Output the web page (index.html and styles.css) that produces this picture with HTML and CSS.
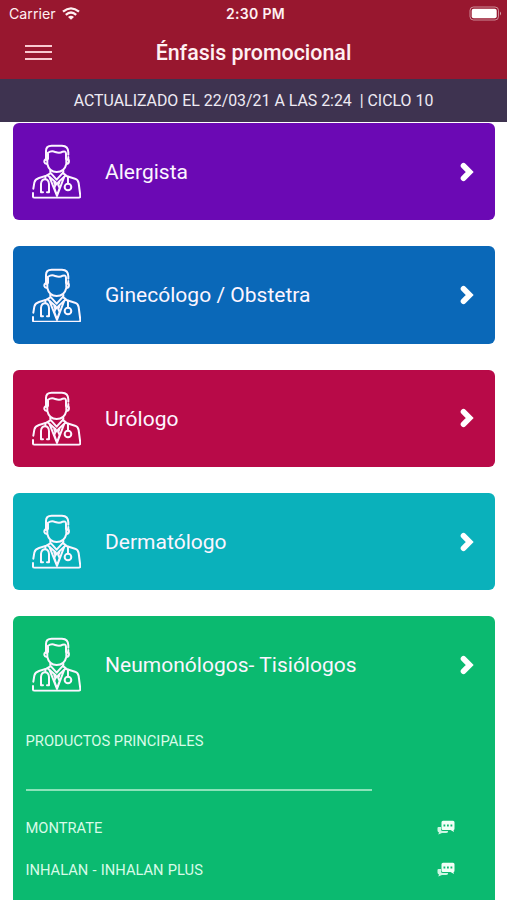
FILE: index.html
```html
<!DOCTYPE html>
<html lang="es">
<head>
<meta charset="utf-8">
<title>Énfasis promocional</title>
<link rel="stylesheet" href="styles.css">
</head>
<body>
<svg class="defs" width="0" height="0">
  <symbol id="doctor" viewBox="36 28 148 164">
    <g fill="none" stroke="currentColor" stroke-width="6" stroke-linecap="round" stroke-linejoin="round">
      <path d="M78 76V49Q78 33 95 33H126Q145 34 145 53V60M145 67V76"/>
      <path d="M84 73V54Q95 46 106 52Q119 57 128 51Q137 48 138 56V73"/>
      <path d="M79 74Q72 74 73 82Q75 89 82 88C85 101 94 112 110 112C126 112 136 101 139 88Q147 88 147 80Q147 74 140 74M82 88V76M139 88V76"/>
      <path d="M91 108V116L82 121L107 143L110 149L115 143L138 122L130 116V108M93 116L110 135L127 116"/>
      <path d="M39 175V186Q39 189 44 189H176Q182 189 181 183L176 145Q174 135 165 132L139 124M82 122L57 130Q45 134 43 144L40 162"/>
      <path d="M89 128L111 184L132 128M103 143L106 151L103 160L111 183L119 160L115 151L118 143"/>
      <path d="M76 125V133M69 173H63V148Q64 134 75 134Q86 134 87 148V173H81"/>
      <path d="M144 126V146"/><circle cx="144" cy="157" r="10"/>
    </g>
  </symbol>
  <symbol id="chevron" viewBox="0 0 14 20">
    <path d="M3.500 3.800L9.700 10L3.500 16.200" fill="none" stroke="currentColor" stroke-width="5.600" stroke-linejoin="miter" stroke-linecap="round"/>
  </symbol>
  <symbol id="chat" viewBox="0 0 18 15">
    <path d="M1.500 7H4V9.500Q4 11 6 11H11V11.500Q11 13 9 13H5L1.300 14.500L2 12.600Q.5 12 .5 10.500V8Q.5 7 1.500 7Z" fill="currentColor" opacity=".85"/>
    <path fill-rule="evenodd" d="M6 .8H16Q17.500.8 17.500 2.300V8.500Q17.500 10 16.500 10L17 12L13.500 10H6Q4.500 10 4.500 8.500V2.300Q4.500.8 6 .8ZM6.500 4.600V6.400H8.300V4.600ZM10 4.600V6.400H11.800V4.600ZM13.500 4.600V6.400H15.300V4.600Z" fill="currentColor"/>
  </symbol>
</svg>
<header class="header">
  <div class="status">
    <div class="carrier"><span>Carrier</span>
      <svg class="wifi" viewBox="0 0 18 13"><g fill="none" stroke="currentColor" stroke-width="2.300"><path d="M1 4.700Q9-2 17 4.700"/><path d="M3.800 7.800Q9 3.300 14.200 7.800"/></g><path d="M6 9.900Q9 7.500 12 9.900L9 12.800Z" fill="currentColor"/></svg>
    </div>
    <time class="clock">2:30 PM</time>
    <svg class="battery" viewBox="0 0 33 15"><rect x="1" y="1" width="28.500" height="13" rx="3.500" fill="none" stroke="currentColor" opacity=".5"/><rect x="2.700" y="2.700" width="25" height="9.600" rx="2" fill="currentColor"/><path d="M31 5.500Q33 7.500 31 9.500Z" fill="currentColor" opacity=".6"/></svg>
  </div>
  <div class="nav">
    <div class="menu"><i></i><i></i><i></i></div>
    <h1 class="title">Énfasis promocional</h1>
  </div>
</header>
<div class="updated">ACTUALIZADO EL 22/03/21 A LAS 2:24 &nbsp;| CICLO 10</div>
<main class="list">
  <section class="card purple"><div class="row"><svg class="doctor"><use href="#doctor"/></svg><h2 class="name">Alergista</h2><svg class="chevron"><use href="#chevron"/></svg></div></section>
  <section class="card blue"><div class="row"><svg class="doctor"><use href="#doctor"/></svg><h2 class="name">Ginecólogo / Obstetra</h2><svg class="chevron"><use href="#chevron"/></svg></div></section>
  <section class="card red"><div class="row"><svg class="doctor"><use href="#doctor"/></svg><h2 class="name">Urólogo</h2><svg class="chevron"><use href="#chevron"/></svg></div></section>
  <section class="card teal"><div class="row"><svg class="doctor"><use href="#doctor"/></svg><h2 class="name">Dermatólogo</h2><svg class="chevron"><use href="#chevron"/></svg></div></section>
  <section class="card green">
    <div class="row"><svg class="doctor"><use href="#doctor"/></svg><h2 class="name">Neumonólogos- Tisiólogos</h2><svg class="chevron"><use href="#chevron"/></svg></div>
    <div class="products">
      <h3 class="heading">PRODUCTOS PRINCIPALES</h3>
      <div class="rule"></div>
      <div class="product"><span>MONTRATE</span><svg class="chat"><use href="#chat"/></svg></div>
      <div class="product"><span>INHALAN - INHALAN PLUS</span><svg class="chat"><use href="#chat"/></svg></div>
    </div>
  </section>
</main>
</body>
</html>
```
FILE: styles.css
```css
* { box-sizing: border-box; }
body { margin: 0; height: 900px; overflow: hidden; background: #fff; color: #fff; font-family: Roboto, "Liberation Sans", sans-serif; }
h1, h2, h3 { margin: 0; font-weight: 400; }
svg { display: block; flex: none; }
.defs { position: absolute; }
.header { height: 79px; background: #98172f; color: #fff0f2; }
.status { height: 27px; display: grid; grid-template-columns: 1fr auto 1fr; align-items: center; padding: 0 5px 0 9px; font-family: Inter, sans-serif; font-size: 14px; }
.carrier { display: flex; align-items: center; gap: 6px; font-size: 14.200px; }
.wifi { width: 18px; height: 13px; }
.clock { font-weight: 600; letter-spacing: .3px; }
.battery { width: 33px; height: 15px; justify-self: end; color: #fff; }
.nav { height: 52px; display: grid; grid-template-columns: 1fr auto 1fr; align-items: center; padding: 0 25px; }
.menu { width: 27px; display: grid; gap: 4.500px; margin-bottom: 2px; }
.menu i { height: 2px; background: #f9c9d0; }
.title { font-size: 21.400px; font-weight: 500; line-height: 51px; margin-bottom: 1px; }
.updated { height: 43px; line-height: 44px; background: #3e3350; color: #eeeaf4; text-align: center; font-size: 15.900px; white-space: pre; }
.list { padding: 1px 12.500px 0 13px; display: grid; gap: 25.900px; }
.card { min-height: 97.400px; border-radius: 6px; }
.purple { background: #6b09b4; }
.blue { background: #0a68b8; }
.red { background: #b80a48; }
.teal { background: #0ab1bb; }
.green { background: #0bba70; height: 300px; }
.row { height: 97.400px; display: flex; align-items: center; padding: 0 21px 0 19px; color: #fcf5ff; }
.doctor { width: 49.300px; height: 54.700px; }
.name { margin-left: 23.700px; font-size: 21px; line-height: 24px; padding-top: .6px; flex: 1; letter-spacing: .02px; }
.chevron { width: 14px; height: 20px; color: #fff; }
.products { padding: 18.500px 40px 0 12.500px; color: #d8fbe8; font-size: 14.700px; }
.heading { font-size: 14.750px; line-height: 19px; }
.rule { width: 346px; height: 2px; margin: 38px 0 15.500px; background: #8be3b9; }
.product { height: 42.500px; display: flex; justify-content: space-between; align-items: center; word-spacing: .6px; }
.chat { width: 18px; height: 15px; margin-bottom: 1px; color: #f1fff7; }
```
